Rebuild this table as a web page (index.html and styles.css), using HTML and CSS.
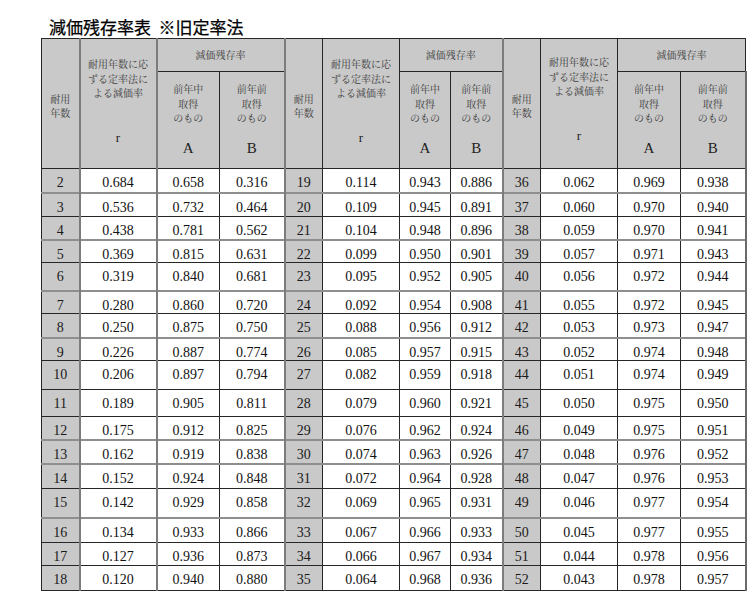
FILE: index.html
```html
<!DOCTYPE html>
<html lang="ja">
<head>
<meta charset="utf-8">
<title>減価残存率表 ※旧定率法</title>
<link rel="stylesheet" href="styles.css">
</head>
<body>
<div class="page">
  <h1 class="title">減価残存率表&nbsp;&nbsp;※旧定率法</h1>
  <table class="tbl">
    <colgroup>
      <col class="c-year"><col class="c-rate"><col class="c-a"><col class="c-b">
      <col class="c-year"><col class="c-rate"><col class="c-a2"><col class="c-b2">
      <col class="c-year"><col class="c-rate"><col class="c-a"><col class="c-b">
    </colgroup>
    <thead>
      <tr class="hr1">
        <th rowspan="2" class="h-year"><div class="jp">耐用<br>年数</div></th>
        <th rowspan="2" class="h-rate gv"><div class="jp">耐用年数に応<br>ずる定率法に<br>よる減価率</div><div class="sym sym-r">r</div></th>
        <th colspan="2" class="h-grp gv"><span class="jp">減価残存率</span></th>
        <th rowspan="2" class="h-year gv"><div class="jp">耐用<br>年数</div></th>
        <th rowspan="2" class="h-rate"><div class="jp">耐用年数に応<br>ずる定率法に<br>よる減価率</div><div class="sym sym-r">r</div></th>
        <th colspan="2" class="h-grp"><span class="jp">減価残存率</span></th>
        <th rowspan="2" class="h-year gv"><div class="jp">耐用<br>年数</div></th>
        <th rowspan="2" class="h-rate h-rate3"><div class="jp">耐用年数に応<br>ずる定率法に<br>よる減価率</div><div class="sym sym-r">r</div></th>
        <th colspan="2" class="h-grp"><span class="jp">減価残存率</span></th>
      </tr>
      <tr class="hr2">
        <th class="h-sub gv"><div class="jp">前年中<br>取得<br>のもの</div><div class="sym">A</div></th>
        <th class="h-sub"><div class="jp">前年前<br>取得<br>のもの</div><div class="sym">B</div></th>
        <th class="h-sub"><div class="jp">前年中<br>取得<br>のもの</div><div class="sym">A</div></th>
        <th class="h-sub"><div class="jp">前年前<br>取得<br>のもの</div><div class="sym">B</div></th>
        <th class="h-sub"><div class="jp">前年中<br>取得<br>のもの</div><div class="sym">A</div></th>
        <th class="h-sub gr"><div class="jp">前年前<br>取得<br>のもの</div><div class="sym">B</div></th>
      </tr>
    </thead>
    <tbody>
      <tr class="r24"><td class="yr">2</td><td class="gv">0.684</td><td class="gv">0.658</td><td>0.316</td><td class="yr gv">19</td><td>0.114</td><td>0.943</td><td>0.886</td><td class="yr gv">36</td><td>0.062</td><td>0.969</td><td class="gr">0.938</td></tr>
      <tr class="r24 lt"><td class="yr">3</td><td class="gv">0.536</td><td class="gv">0.732</td><td>0.464</td><td class="yr gv">20</td><td>0.109</td><td>0.945</td><td>0.891</td><td class="yr gv">37</td><td>0.060</td><td>0.970</td><td class="gr">0.940</td></tr>
      <tr class="r23"><td class="yr">4</td><td class="gv">0.438</td><td class="gv">0.781</td><td>0.562</td><td class="yr gv">21</td><td>0.104</td><td>0.948</td><td>0.896</td><td class="yr gv">38</td><td>0.059</td><td>0.970</td><td class="gr">0.941</td></tr>
      <tr class="r23 lt"><td class="yr">5</td><td class="gv">0.369</td><td class="gv">0.815</td><td>0.631</td><td class="yr gv">22</td><td>0.099</td><td>0.950</td><td>0.901</td><td class="yr gv">39</td><td>0.057</td><td>0.971</td><td class="gr">0.943</td></tr>
      <tr class="r28"><td class="yr">6</td><td class="gv">0.319</td><td class="gv">0.840</td><td>0.681</td><td class="yr gv">23</td><td>0.095</td><td>0.952</td><td>0.905</td><td class="yr gv">40</td><td>0.056</td><td>0.972</td><td class="gr">0.944</td></tr>
      <tr class="r23 lt"><td class="yr">7</td><td class="gv">0.280</td><td class="gv">0.860</td><td>0.720</td><td class="yr gv">24</td><td>0.092</td><td>0.954</td><td>0.908</td><td class="yr gv">41</td><td>0.055</td><td>0.972</td><td class="gr">0.945</td></tr>
      <tr class="r24"><td class="yr">8</td><td class="gv">0.250</td><td class="gv">0.875</td><td>0.750</td><td class="yr gv">25</td><td>0.088</td><td>0.956</td><td>0.912</td><td class="yr gv">42</td><td>0.053</td><td>0.973</td><td class="gr">0.947</td></tr>
      <tr class="r23 lt"><td class="yr">9</td><td class="gv">0.226</td><td class="gv">0.887</td><td>0.774</td><td class="yr gv">26</td><td>0.085</td><td>0.957</td><td>0.915</td><td class="yr gv">43</td><td>0.052</td><td>0.974</td><td class="gr">0.948</td></tr>
      <tr class="r29"><td class="yr">10</td><td class="gv">0.206</td><td class="gv">0.897</td><td>0.794</td><td class="yr gv">27</td><td>0.082</td><td>0.959</td><td>0.918</td><td class="yr gv">44</td><td>0.051</td><td>0.974</td><td class="gr">0.949</td></tr>
      <tr class="r27"><td class="yr">11</td><td class="gv">0.189</td><td class="gv">0.905</td><td>0.811</td><td class="yr gv">28</td><td>0.079</td><td>0.960</td><td>0.921</td><td class="yr gv">45</td><td>0.050</td><td>0.975</td><td class="gr">0.950</td></tr>
      <tr class="r23"><td class="yr">12</td><td class="gv">0.175</td><td class="gv">0.912</td><td>0.825</td><td class="yr gv">29</td><td>0.076</td><td>0.962</td><td>0.924</td><td class="yr gv">46</td><td>0.049</td><td>0.975</td><td class="gr">0.951</td></tr>
      <tr class="r24 lt"><td class="yr">13</td><td class="gv">0.162</td><td class="gv">0.919</td><td>0.838</td><td class="yr gv">30</td><td>0.074</td><td>0.963</td><td>0.926</td><td class="yr gv">47</td><td>0.048</td><td>0.976</td><td class="gr">0.952</td></tr>
      <tr class="r25 lt"><td class="yr">14</td><td class="gv">0.152</td><td class="gv">0.924</td><td>0.848</td><td class="yr gv">31</td><td>0.072</td><td>0.964</td><td>0.928</td><td class="yr gv">48</td><td>0.047</td><td>0.976</td><td class="gr">0.953</td></tr>
      <tr class="r29"><td class="yr">15</td><td class="gv">0.142</td><td class="gv">0.929</td><td>0.858</td><td class="yr gv">32</td><td>0.069</td><td>0.965</td><td>0.931</td><td class="yr gv">49</td><td>0.046</td><td>0.977</td><td class="gr">0.954</td></tr>
      <tr class="r25 lt"><td class="yr">16</td><td class="gv">0.134</td><td class="gv">0.933</td><td>0.866</td><td class="yr gv">33</td><td>0.067</td><td>0.966</td><td>0.933</td><td class="yr gv">50</td><td>0.045</td><td>0.977</td><td class="gr">0.955</td></tr>
      <tr class="r23"><td class="yr">17</td><td class="gv">0.127</td><td class="gv">0.936</td><td>0.873</td><td class="yr gv">34</td><td>0.066</td><td>0.967</td><td>0.934</td><td class="yr gv">51</td><td>0.044</td><td>0.978</td><td class="gr">0.956</td></tr>
      <tr class="r25"><td class="yr">18</td><td class="gv">0.120</td><td class="gv">0.940</td><td>0.880</td><td class="yr gv">35</td><td>0.064</td><td>0.968</td><td>0.936</td><td class="yr gv">52</td><td>0.043</td><td>0.978</td><td class="gr">0.957</td></tr>
    </tbody>
  </table>
</div>
</body>
</html>
```

FILE: styles.css
```css
html, body {
  margin: 0;
  padding: 0;
  background: #ffffff;
}

.page {
  padding: 17px 0 0 41px;
}

.title {
  margin: 0 0 1px 8px;
  font-family: "Noto Sans CJK JP", "Noto Sans", sans-serif;
  font-size: 17px;
  font-weight: normal;
  line-height: 20px;
  color: #000;
  letter-spacing: 0;
  -webkit-text-stroke: 0.25px #000;
}

.tbl {
  border-collapse: collapse;
  table-layout: fixed;
  width: 705px;
  font-family: "Liberation Serif", "Times New Roman", serif;
  color: #111;
}

.c-year { width: 38px; }
.c-rate { width: 77px; }
.c-a { width: 63px; }
.c-b { width: 65px; }
.c-a2 { width: 51px; }
.c-b2 { width: 52px; }

.tbl th,
.tbl td {
  border: 1px solid #262626;
  padding: 0;
  text-align: center;
}

.tbl th {
  background: #c9c9c9;
  font-weight: normal;
  color: #3a3a3a;
}

.jp {
  font-family: "Noto Serif CJK JP", "Noto Sans CJK JP", serif;
  font-size: 10px;
  line-height: 14.5px;
  color: #3d3d3d;
}

.hr1 { height: 33px; }
.hr2 { height: 97px; }

.tbl .h-year {
  vertical-align: middle;
  padding-top: 5px;
}

.tbl .h-rate {
  vertical-align: top;
  padding-top: 18px;
}

.tbl .h-rate3 {
  padding-top: 16px;
}

.tbl .h-grp {
  vertical-align: middle;
  padding-bottom: 2px;
}

.tbl .h-sub {
  vertical-align: top;
  padding-top: 10px;
}

.sym {
  font-family: "Liberation Serif", "Times New Roman", serif;
  font-size: 15px;
  line-height: 16px;
  color: #222;
  margin-top: 14px;
}

.sym.sym-r {
  font-size: 13px;
  margin-top: 29px;
}

.tbl td {
  font-size: 14px;
  line-height: 14px;
  vertical-align: top;
  padding-top: 7px;
  background: #fff;
}

.tbl td.yr {
  background: #c9c9c9;
  color: #1a1a1a;
}

.gv {
  border-left: 2px solid #7c7c7c !important;
}

.gr {
  border-right: 2px solid #6a6a6a !important;
}

.lt td {
  border-top: 2px solid #8e8e8e;
}

.r23 { height: 23px; }
.r24 { height: 24px; }
.r25 { height: 25px; }
.r27 { height: 27px; }
.r28 { height: 28px; }
.r29 { height: 29px; }
```
